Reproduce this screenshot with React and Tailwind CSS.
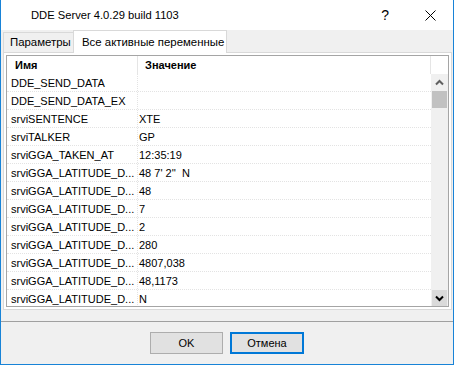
import React from "react";

const rows = [
  ["DDE_SEND_DATA", ""],
  ["DDE_SEND_DATA_EX", ""],
  ["srviSENTENCE", "XTE"],
  ["srviTALKER", "GP"],
  ["srviGGA_TAKEN_AT", "12:35:19"],
  ["srviGGA_LATITUDE_D...", "48 7' 2''  N"],
  ["srviGGA_LATITUDE_D...", "48"],
  ["srviGGA_LATITUDE_D...", "7"],
  ["srviGGA_LATITUDE_D...", "2"],
  ["srviGGA_LATITUDE_D...", "280"],
  ["srviGGA_LATITUDE_D...", "4807,038"],
  ["srviGGA_LATITUDE_D...", "48,1173"],
  ["srviGGA_LATITUDE_D...", "N"],
];

const Chevron = ({ up, color }) => (
  <svg width="9" height="7" viewBox="0 0 9 7">
    <polyline
      points={up ? "1,5.5 4.5,2 8,5.5" : "1,1.5 4.5,5 8,1.5"}
      fill="none"
      stroke={color}
      strokeWidth="2"
    />
  </svg>
);

const App = () => {
  return (
    <div className="w-[454px] h-[365px] bg-[#f0f0f0] border-x border-b border-[#1883d7] flex flex-col overflow-hidden font-['Liberation_Sans',Arial,sans-serif] text-black">
      {/* title bar */}
      <div className="h-[30px] shrink-0 bg-white flex items-center">
        <span className="pl-[30px] text-[11.2px] whitespace-nowrap">DDE Server 4.0.29 build 1103</span>
        <span className="ml-auto mr-[36px] text-[14px] leading-none">?</span>
        <svg width="11" height="11" viewBox="0 0 11 11" className="mr-[17px]">
          <path d="M0.5 0.5 L10.5 10.5 M10.5 0.5 L0.5 10.5" stroke="#000" strokeWidth="1" />
        </svg>
      </div>

      {/* tabs */}
      <div className="h-[22px] shrink-0 flex items-end pl-[2px] text-[11.4px] whitespace-nowrap">
        <div className="w-[71px] h-[20px] border border-b-0 border-[#d9d9d9] bg-[#f0f0f0] flex items-center pl-[6px]">
          Параметры
        </div>
        <div className="relative z-10 -mb-px -ml-px w-[154px] h-[23px] border border-b-0 border-[#d9d9d9] bg-white flex items-start pt-[3px] pl-[8px]">
          Все активные переменные
        </div>
      </div>

      {/* panel */}
      <div className="ml-[2px] w-[449px] h-[258px] shrink-0 border border-[#d9d9d9] bg-white p-[2px]">
        <div className="h-full border border-[#a5a5a5] flex text-[11px]">
          <div className="flex-1 flex flex-col overflow-hidden">
            <div className="h-[18px] shrink-0 flex font-bold">
              <div className="w-[131px] border-r border-[#e5e5e5] pl-[8px] flex items-center">Имя</div>
              <div className="w-[293px] border-r border-[#e5e5e5] pl-[7px] flex items-center">Значение</div>
            </div>
            {rows.map(([name, value], i) => (
              <div key={i} className="h-[18px] shrink-0 flex border-b border-dotted border-[#e3e3e3]">
                <div className="w-[131px] border-r border-dotted border-[#e3e3e3] pl-[4px] pt-[2px] flex items-center whitespace-pre">
                  {name}
                </div>
                <div className="flex-1 pl-[1px] pt-[2px] flex items-center whitespace-pre">{value}</div>
              </div>
            ))}
          </div>

          {/* scrollbar */}
          <div className="w-[17px] shrink-0 flex flex-col">
            <div className="h-[18px] bg-white" />
            <div className="flex-1 bg-[#f0f0f0] flex flex-col items-center">
              <div className="h-[17px] w-full flex items-center justify-center">
                <Chevron up color="#606060" />
              </div>
              <div className="w-[15px] h-[17px] bg-[#c1c1c1]" />
              <div className="flex-1" />
              <div className="w-[15px] h-[16px] bg-[#dadada] flex items-center justify-center">
                <Chevron color="#000" />
              </div>
            </div>
          </div>
        </div>
      </div>

      {/* bottom */}
      <div className="mt-[11px] border-t border-[#a0a0a0] pt-[10px] flex justify-center gap-[7px] text-[11px]">
        <button className="w-[73px] h-[22px] bg-[#e1e1e1] border border-[#adadad]">OK</button>
        <button className="w-[74px] h-[22px] bg-[#e1e1e1] border-2 border-[#0078d7]">Отмена</button>
      </div>
    </div>
  );
};

export default App;
